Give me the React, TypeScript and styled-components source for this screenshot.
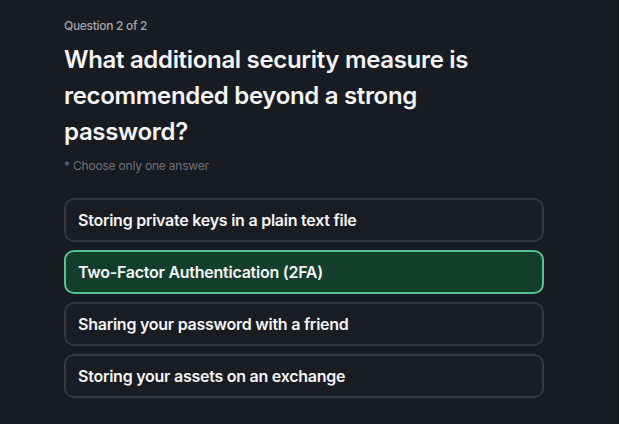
import React, { useState } from "react";
import styled, { createGlobalStyle } from "styled-components";

const GlobalStyle = createGlobalStyle`
  html, body {
    margin: 0;
    padding: 0;
    background: #181b22;
  }
  body {
    font-family: Inter, "Noto Sans", "Liberation Sans", sans-serif;
    -webkit-font-smoothing: antialiased;
  }
`;

const Page = styled.div`
  box-sizing: border-box;
  width: 619px;
  height: 424px;
  background: #181b22;
  border-right: 2px solid #121419;
  padding: 18px 0 0 64px;
  display: flex;
  flex-direction: column;
  overflow: hidden;
`;

const Counter = styled.div`
  font-size: 12px;
  line-height: 16px;
  font-weight: 500;
  color: #a3a5ab;
  letter-spacing: -0.3px;
`;

const Title = styled.h1`
  margin: 8px 0 0;
  width: 430px;
  font-size: 24px;
  line-height: 36px;
  font-weight: 600;
  color: #f3f4f6;
  letter-spacing: -0.32px;
`;

const Hint = styled.div`
  margin-top: 8px;
  font-size: 12px;
  line-height: 16px;
  color: #6d7079;
  letter-spacing: -0.2px;
`;

const Options = styled.div`
  margin-top: 24px;
  width: 480px;
  display: flex;
  flex-direction: column;
  gap: 8px;
`;

const Option = styled.button<{ $selected?: boolean }>`
  box-sizing: border-box;
  height: 44px;
  width: 100%;
  display: flex;
  align-items: center;
  padding: 0 12px;
  border-radius: 10px;
  border: 2px solid ${(p) => (p.$selected ? "#55c290" : "#363841")};
  background: ${(p) => (p.$selected ? "#133e2c" : "#1a1c23")};
  color: #f3f4f6;
  font-family: inherit;
  font-size: 16px;
  font-weight: 600;
  letter-spacing: -0.25px;
  text-align: left;
  cursor: pointer;
`;

const answers = [
  "Storing private keys in a plain text file",
  "Two-Factor Authentication (2FA)",
  "Sharing your password with a friend",
  "Storing your assets on an exchange",
];

export default function App() {
  const [selected, setSelected] = useState(1);
  return (
    <>
      <GlobalStyle />
      <Page>
        <Counter>Question 2 of 2</Counter>
        <Title>What additional security measure is recommended beyond a strong password?</Title>
        <Hint>* Choose only one answer</Hint>
        <Options>
          {answers.map((a, i) => (
            <Option key={a} $selected={selected === i} onClick={() => setSelected(i)}>
              {a}
            </Option>
          ))}
        </Options>
      </Page>
    </>
  );
}
